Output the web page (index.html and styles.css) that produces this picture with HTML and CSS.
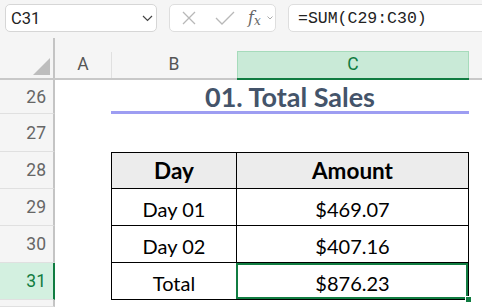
FILE: index.html
```html
<!DOCTYPE html>
<html lang="en">
<head>
    <meta charset="UTF-8">
    <meta name="viewport" content="width=device-width, initial-scale=1.0">
    <title>Total Sales</title>
    <link rel="stylesheet" href="styles.css">
</head>
<body>
    <!-- Formula bar -->
    <div class="toolbar">
        <div class="namebox">
            <span>C31</span>
            <svg width="11" height="7" viewBox="0 0 11 7"><polyline points="1,1 5.5,5.5 10,1" fill="none" stroke="#444" stroke-width="1.2"/></svg>
        </div>
        <div class="fxbuttons">
            <svg class="ico-x" width="14" height="14" viewBox="0 0 14 14"><path d="M1 1 L13 13 M13 1 L1 13" stroke="#b8b8b8" stroke-width="1.3" fill="none"/></svg>
            <svg class="ico-check" width="20" height="14" viewBox="0 0 20 14"><polyline points="1,7 7,13 19,1" fill="none" stroke="#b8b8b8" stroke-width="1.3"/></svg>
            <span class="fx">f<sub>x</sub></span>
            <svg class="ico-more" width="6" height="4" viewBox="0 0 6 4"><polyline points="0.5,0.5 3,3 5.5,0.5" fill="none" stroke="#aaa" stroke-width="1"/></svg>
        </div>
        <div class="formula">=SUM(C29:C30)</div>
    </div>

    <!-- Sheet grid -->
    <div class="sheet">
        <div class="corner"><span class="tri"></span></div>
        <div class="colhead">A</div>
        <div class="colhead sep">B</div>
        <div class="colhead active">C</div>
        <div class="colhead rest"></div>

        <div class="rowhead">26</div>
        <div class="cell"></div>
        <div class="cell title">01. Total Sales</div>
        <div class="cell"></div>

        <div class="rowhead">27</div>
        <div class="cell"></div><div class="cell"></div><div class="cell"></div><div class="cell"></div>

        <div class="rowhead">28</div>
        <div class="cell"></div>
        <div class="cell tb first top th">Day</div>
        <div class="cell tb top th">Amount</div>
        <div class="cell"></div>

        <div class="rowhead">29</div>
        <div class="cell"></div>
        <div class="cell tb first">Day 01</div>
        <div class="cell tb">$469.07</div>
        <div class="cell"></div>

        <div class="rowhead">30</div>
        <div class="cell"></div>
        <div class="cell tb first">Day 02</div>
        <div class="cell tb">$407.16</div>
        <div class="cell"></div>

        <div class="rowhead active">31</div>
        <div class="cell"></div>
        <div class="cell tb first">Total</div>
        <div class="cell tb selected">$876.23<span class="handle"></span></div>
        <div class="cell"></div>

        <!-- next row, only its top edge is visible -->
        <div class="rowhead"></div>
        <div class="cell"></div><div class="cell"></div><div class="cell"></div><div class="cell"></div>
    </div>
</body>
</html>
```

FILE: styles.css
```css
* {
    box-sizing: border-box;
}

body {
    margin: 0;
    width: 482px;
    height: 307px;
    overflow: hidden;
    background-color: #fff;
    font-family: Roboto, "Noto Sans", sans-serif;
}

/* formula bar */
.toolbar {
    height: 40px;
    background-color: #f5f5f5;
    display: flex;
    align-items: flex-start;
    padding: 4px 0 0 5px;
    gap: 12px;
}

.namebox {
    width: 152px;
    height: 28px;
    background-color: #fff;
    border: 1px solid #d6d6d6;
    border-radius: 5px;
    display: flex;
    align-items: center;
    justify-content: space-between;
    padding: 0 3px 0 5px;
    font-size: 16.5px;
    color: #222;
}

.fxbuttons {
    width: 107px;
    height: 28px;
    background-color: #fff;
    border: 1px solid #dedede;
    border-radius: 5px;
    display: flex;
    align-items: center;
    padding-left: 12px;
}

.ico-check {
    margin-left: 19px;
}

.fx {
    margin-left: 13px;
    font-family: "DejaVu Serif", serif;
    font-style: italic;
    font-size: 16px;
    color: #666;
    line-height: 1;
}

.fx sub {
    font-size: 12px;
    vertical-align: -2px;
}

.ico-more {
    margin-left: 6px;
}

.formula {
    flex: 1;
    height: 28px;
    margin-right: -20px;
    background-color: #fff;
    border: 1px solid #dedede;
    border-radius: 5px;
    display: flex;
    align-items: center;
    padding-left: 9px;
    font-family: "Liberation Mono", monospace;
    font-size: 16.5px;
    color: #222;
}

/* sheet */
.sheet {
    display: grid;
    grid-template-columns: 55px 56px 126px 232px 1fr;
    grid-template-rows: 40px 34px 38px 37px 37px 37px 37px 1fr;
    height: 267px;
}

.corner {
    background-color: #f5f5f5;
    border-bottom: 2px solid #c8c8c8;
    position: relative;
}

.corner::after {
    content: "";
    position: absolute;
    right: 0;
    top: -2px;
    bottom: 0;
    width: 2px;
    background-color: #c4c4c4;
}

.tri {
    position: absolute;
    left: 33px;
    top: 18px;
    width: 0;
    height: 0;
    border-left: 17px solid transparent;
    border-bottom: 17px solid #bdbdbd;
}

.colhead {
    background-color: #f5f5f5;
    border-bottom: 2px solid #c8c8c8;
    display: flex;
    align-items: flex-end;
    justify-content: center;
    padding-bottom: 5px;
    font-size: 17.5px;
    color: #555;
    line-height: 1;
}

.colhead.sep {
    background-image: linear-gradient(#e0e0e0, #e0e0e0);
    background-size: 1px 26px;
    background-position: left bottom;
    background-repeat: no-repeat;
}

.colhead.active {
    background-color: #f5f5f5;
    background-image: linear-gradient(#c9ead7, #c9ead7);
    background-size: 100% 26px;
    background-position: left bottom;
    background-repeat: no-repeat;
    border-bottom: 2px solid #107c41;
    color: #107c41;
    position: relative;
}

.colhead.active::before {
    content: "";
    position: absolute;
    left: 0;
    right: 0;
    bottom: 0;
    height: 26px;
    border: 1px solid #a6dbbb;
    border-bottom: none;
}

.rowhead {
    background-color: #f5f5f5;
    border-right: 2px solid #c4c4c4;
    border-bottom: 1px solid #e0e0e0;
    display: flex;
    align-items: center;
    justify-content: flex-end;
    padding-right: 7px;
    font-size: 17.5px;
    color: #666;
}

.rowhead.active {
    background-color: #d3f0e0;
    border-right-color: #107c41;
    color: #107c41;
}

.cell {
    font-family: Lato, "Noto Sans", sans-serif;
    font-size: 20px;
    color: #000;
    display: flex;
    align-items: center;
    justify-content: center;
}

.title {
    grid-column: span 2;
    border-bottom: 3px solid #9d9df2;
    font-size: 27px;
    font-weight: bold;
    color: #44546a;
    padding-top: 2px;
}

.tb {
    border-right: 1px solid #000;
    border-bottom: 1px solid #000;
    padding-top: 3px;
}

.tb.first {
    border-left: 1px solid #000;
}

.tb.top {
    border-top: 1px solid #000;
}

.th {
    background-color: #ececec;
    font-weight: bold;
    font-size: 22.5px;
    padding-top: 0;
}

.selected {
    position: relative;
}

.selected::after {
    content: "";
    position: absolute;
    left: -1px;
    top: 0;
    right: 0;
    bottom: 0;
    border: 2px solid #107c41;
}

.handle {
    position: absolute;
    right: -4px;
    bottom: -4px;
    width: 7px;
    height: 7px;
    background-color: #107c41;
    border: 1px solid #fff;
    z-index: 1;
}
```
